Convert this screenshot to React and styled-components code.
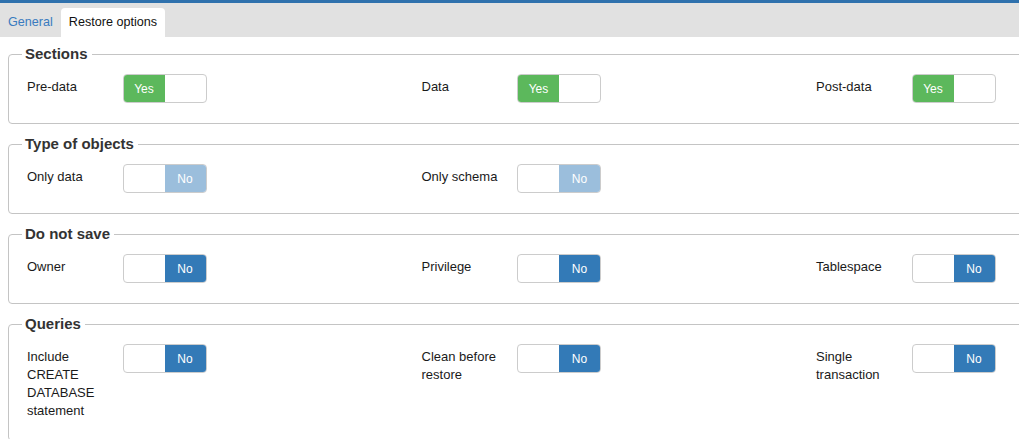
import styled, { createGlobalStyle } from 'styled-components';

const GlobalStyle = createGlobalStyle`
  html, body {
    margin: 0;
    padding: 0;
    background: #fff;
    overflow: hidden;
  }
  body {
    font-family: "Liberation Sans", Arial, sans-serif;
    font-size: 13px;
    color: #222;
  }
`;

const Page = styled.div`
  width: 1240px;
  border-top: 3px solid #2f71ad;
`;

const TabBar = styled.ul`
  display: flex;
  margin: 0;
  padding: 5px 0 0 0;
  list-style: none;
  background: #e1e1e1;
`;

const Tab = styled.li`
  height: 29px;
  line-height: 29px;
  padding: 0 8px;
  font-size: 12.6px;
  border-radius: 4px 4px 0 0;
  color: ${(p) => (p.active ? '#111' : '#3a7bbf')};
  background: ${(p) => (p.active ? '#fff' : 'transparent')};
`;

const Body = styled.div`
  padding: 8px 0 0 8px;
`;

const Group = styled.fieldset`
  margin: 0 0 11px 0;
  padding: 11px 0 20px 18px;
  border: 1px solid #c4c4c4;
  border-radius: 4px;
`;

const Legend = styled.legend`
  margin-left: -5px;
  padding: 0 4px 0 3px;
  font-size: 15px;
  line-height: 18px;
  font-weight: bold;
  color: #333;
`;

const Row = styled.div`
  display: grid;
  grid-template-columns: repeat(3, 394.5px);
`;

const Field = styled.div`
  display: flex;
  align-items: flex-start;
`;

const Label = styled.div`
  width: 95.5px;
  padding-top: 4px;
  line-height: 18px;
  color: #1a1a1a;
`;

const Switch = styled.div`
  display: flex;
  width: 82px;
  height: 27px;
  border: 1px solid #ccc;
  border-radius: 4px;
  overflow: hidden;
  background: #fff;
`;

const Knob = styled.div`
  width: 41px;
  display: flex;
  align-items: center;
  justify-content: center;
  color: #fff;
  font-size: 12px;
  background: ${(p) => p.bg};
`;

const Blank = styled.div`
  flex: 1;
`;

const colors = {
  yes: '#5cb85c',
  no: '#337ab7',
  off: '#9bbedc',
};

function Toggle({ on, disabled }) {
  if (on) {
    return (
      <Switch>
        <Knob bg={colors.yes}>Yes</Knob>
        <Blank />
      </Switch>
    );
  }
  return (
    <Switch>
      <Blank />
      <Knob bg={disabled ? colors.off : colors.no}>No</Knob>
    </Switch>
  );
}

const groups = [
  {
    title: 'Sections',
    fields: [
      { label: 'Pre-data', on: true },
      { label: 'Data', on: true },
      { label: 'Post-data', on: true },
    ],
  },
  {
    title: 'Type of objects',
    fields: [
      { label: 'Only data', disabled: true },
      { label: 'Only schema', disabled: true },
    ],
  },
  {
    title: 'Do not save',
    fields: [
      { label: 'Owner' },
      { label: 'Privilege' },
      { label: 'Tablespace' },
    ],
  },
  {
    title: 'Queries',
    fields: [
      { label: 'Include CREATE DATABASE statement' },
      { label: 'Clean before restore' },
      { label: 'Single transaction' },
    ],
  },
];

export default function App() {
  return (
    <>
      <GlobalStyle />
      <Page>
        <TabBar>
          <Tab>General</Tab>
          <Tab active>Restore options</Tab>
        </TabBar>
        <Body>
          {groups.map((g) => (
            <Group key={g.title}>
              <Legend>{g.title}</Legend>
              <Row>
                {g.fields.map((f) => (
                  <Field key={f.label}>
                    <Label>{f.label}</Label>
                    <Toggle on={f.on} disabled={f.disabled} />
                  </Field>
                ))}
              </Row>
            </Group>
          ))}
        </Body>
      </Page>
    </>
  );
}
